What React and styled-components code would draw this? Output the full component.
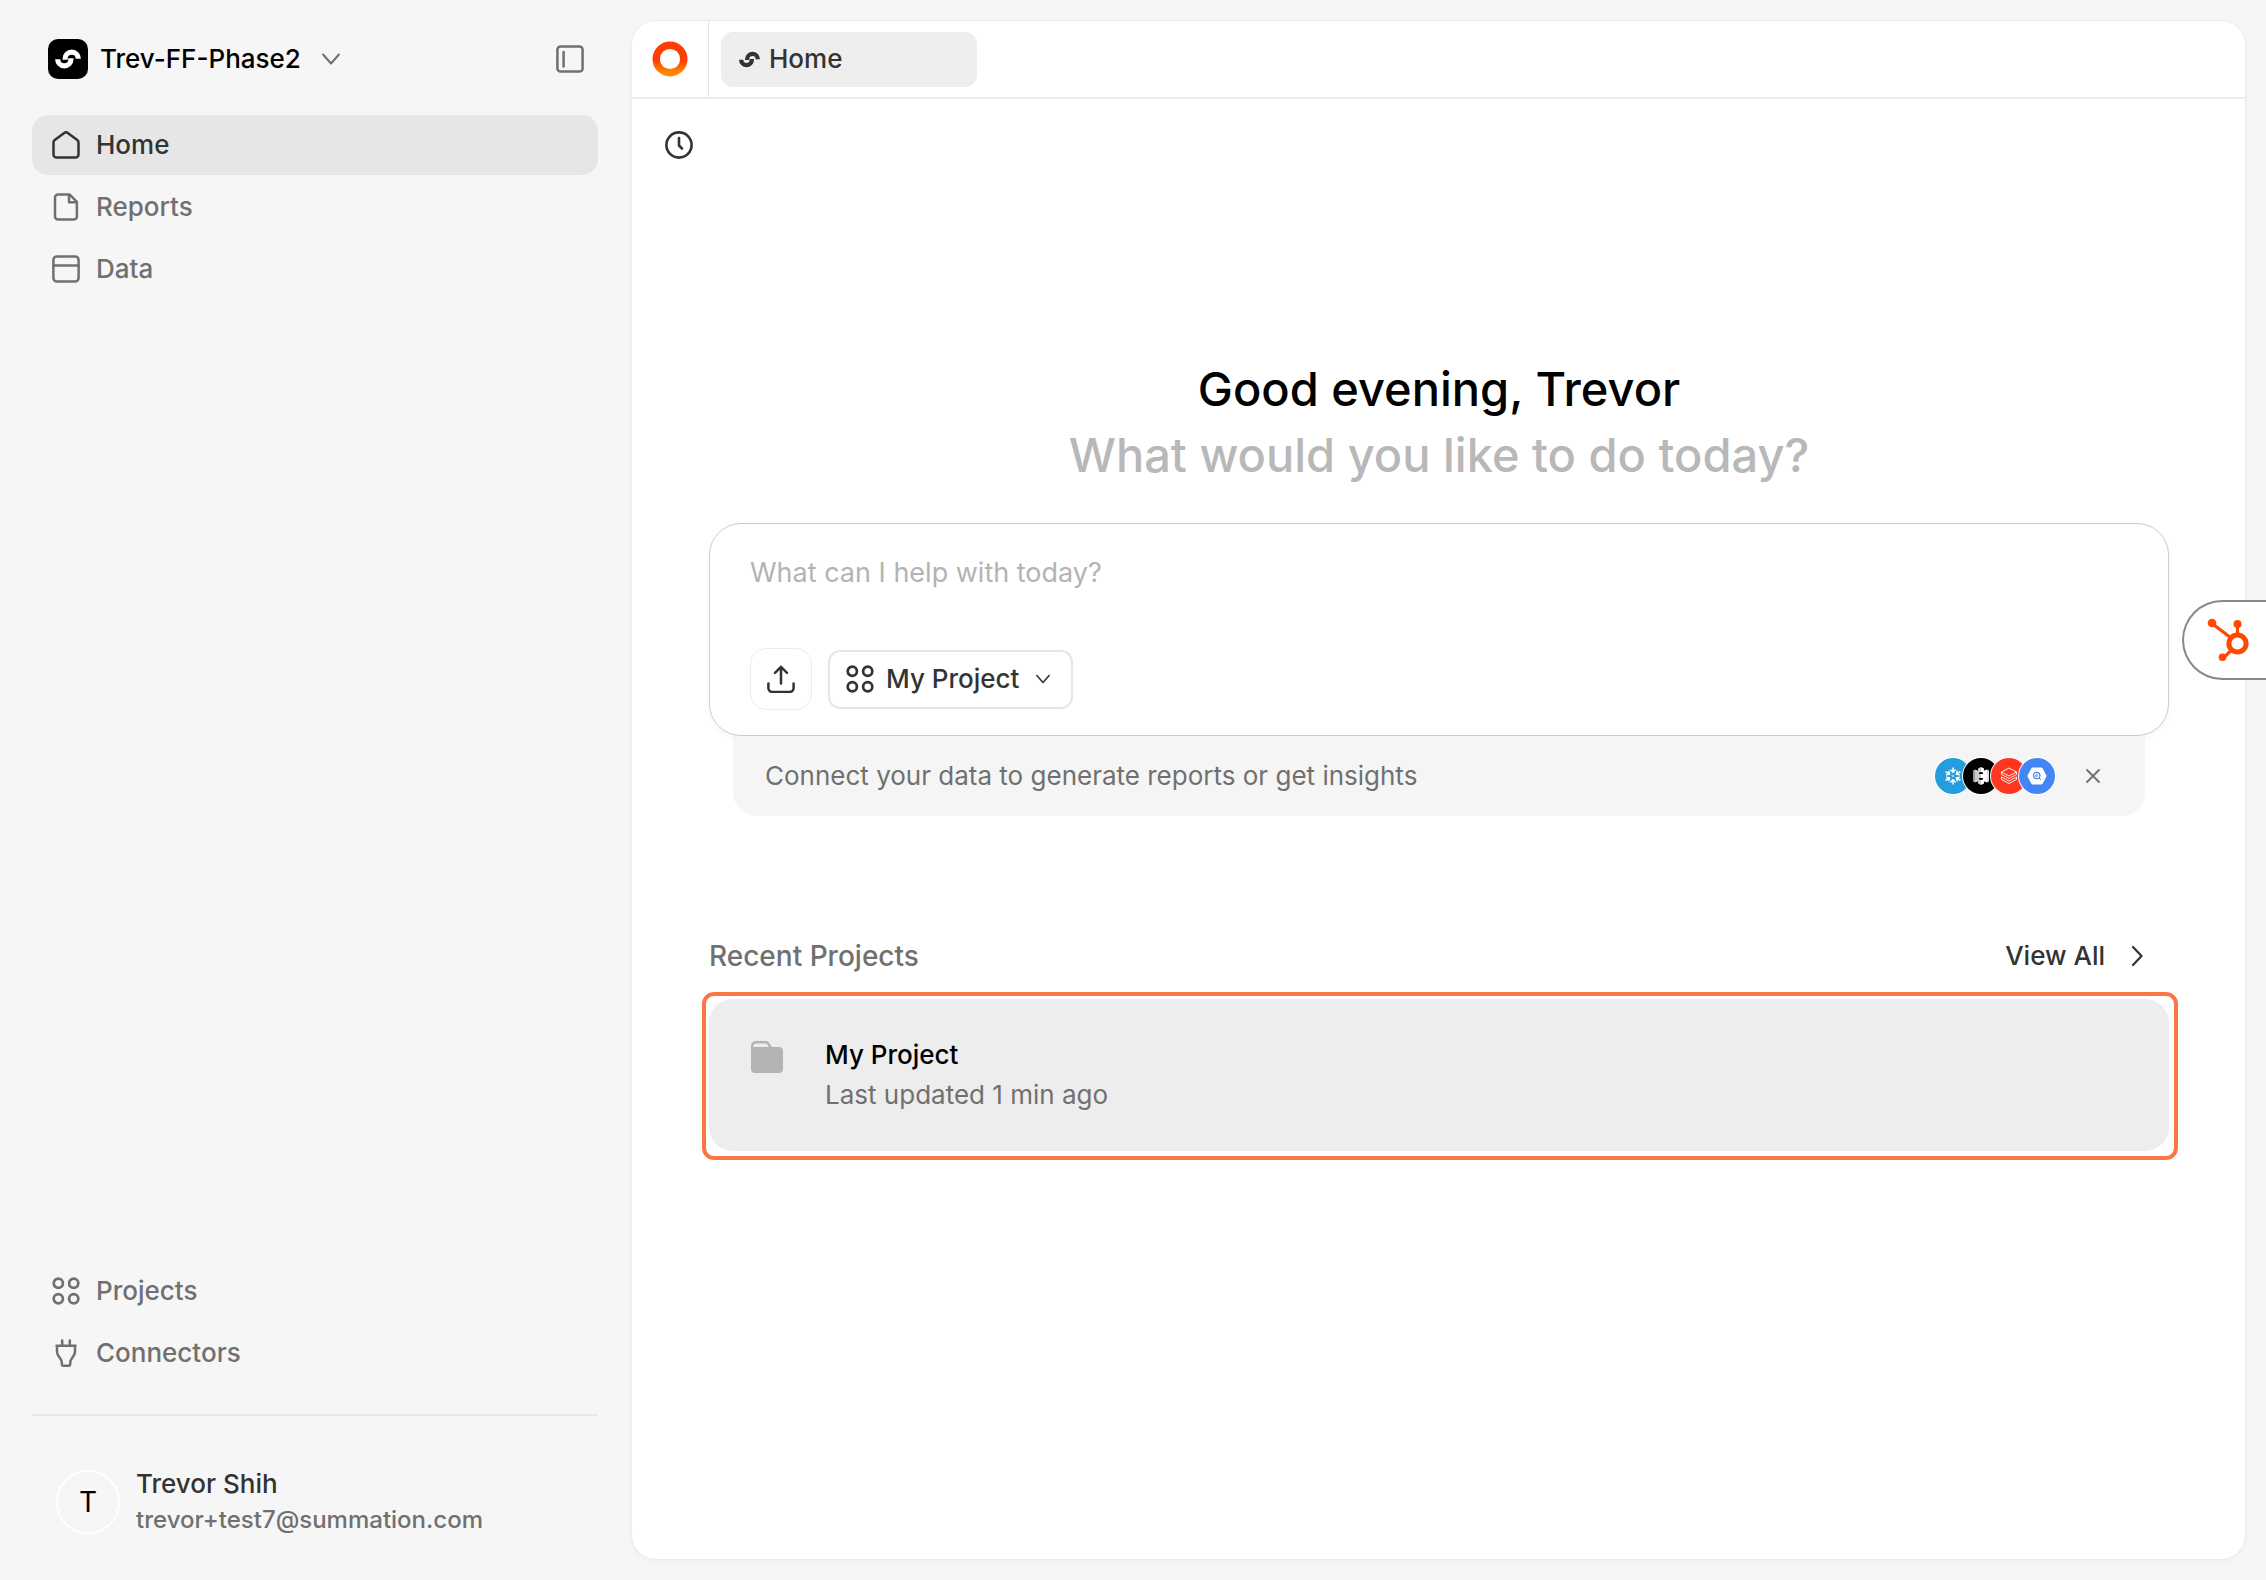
import React from 'react';
import styled, { createGlobalStyle } from 'styled-components';

const GlobalStyle = createGlobalStyle`
  *, *::before, *::after { box-sizing: border-box; }
  body {
    margin: 0;
    background: #f6f6f6;
    color: #333;
    font-family: Inter, "Liberation Sans", sans-serif;
    font-size: 26px;
    line-height: 40px;
  }
  button, input, textarea { font: inherit; color: inherit; }
  button { cursor: pointer; }
  svg { display: block; flex: none; }
  h1, h2, p { margin: 0; font: inherit; }
`;

const Shell = styled.div`
  display: flex;
  min-height: 100vh;
  padding: 21px 21px 21px 32px;
  gap: 34px;
`;

const Sidebar = styled.aside`
  flex: none;
  width: 566px;
  display: flex;
  flex-direction: column;
`;

const Workspace = styled.header`
  display: flex;
  align-items: center;
  justify-content: space-between;
  padding: 0 14px 0 16px;
  height: 76px;
  margin-bottom: 18px;
`;

const PlainButton = styled.button`
  display: flex;
  align-items: center;
  gap: ${(p) => p.$gap || 0}px;
  padding: 0;
  border: 0;
  background: none;
  color: ${(p) => p.$color || '#707070'};
  font-weight: 500;
`;

const WorkspaceName = styled.span`
  color: #000;
  margin-right: 9px;
`;

const NavList = styled.nav`
  display: flex;
  flex-direction: column;
  gap: 2px;
  ${(p) => p.$end && 'margin-top: auto;'}
`;

const NavLink = styled.a`
  display: flex;
  align-items: center;
  gap: 16px;
  height: 60px;
  padding: 0 20px;
  border-radius: 16px;
  text-decoration: none;
  font-weight: 500;
  color: ${(p) => (p.$active ? '#333' : '#707070')};
  background: ${(p) => (p.$active ? '#e6e6e6' : 'transparent')};
`;

const Account = styled.footer`
  display: flex;
  align-items: center;
  gap: 16px;
  margin-top: 31px;
  padding: 50px 24px 21px;
  border-top: 2px solid #e8e8e8;
`;

const Avatar = styled.div`
  flex: none;
  display: grid;
  place-items: center;
  width: 64px;
  height: 64px;
  border: 2px solid #fff;
  border-radius: 50%;
  color: #000;
  font-size: 28px;
`;

const AccountName = styled.p`
  line-height: 36px;
  font-weight: 500;
`;

const AccountMail = styled.p`
  font-size: 24px;
  line-height: 36px;
  font-weight: 500;
  color: #707070;
`;

const Panel = styled.div`
  flex: 1;
  min-width: 0;
  display: flex;
  flex-direction: column;
  background: #fff;
  border-radius: 24px;
  box-shadow: 0 0 0 1px #ececec, 0 2px 6px rgba(0, 0, 0, 0.04);
`;

const TabBar = styled.div`
  display: flex;
  align-items: center;
  height: 78px;
  border-bottom: 2px solid #ececec;
`;

const BrandCell = styled.div`
  display: grid;
  place-items: center;
  width: 77px;
  height: 100%;
  border-right: 1px solid #e2e2e2;
`;

const Tab = styled.button`
  display: flex;
  align-items: center;
  gap: 9px;
  width: 256px;
  height: 55px;
  margin-left: 12px;
  padding: 0 18px;
  border: 0;
  border-radius: 12px;
  background: #eee;
  font-weight: 500;
`;

const Toolbar = styled.div`
  display: flex;
  padding: 32px 33px;
`;

const Content = styled.main`
  display: flex;
  flex-direction: column;
  padding: 165px 76px 0 77px;
`;

const Greeting = styled.h1`
  text-align: center;
  font-size: 47px;
  line-height: 66px;
  font-weight: 500;
  color: #000;
`;

const GreetingHint = styled.span`
  display: block;
  color: #b8b8b8;
`;

const Composer = styled.form`
  display: flex;
  flex-direction: column;
  margin-top: 35px;
  padding: 29px 40px 25px;
  background: #fff;
  border: 1px solid #ccc;
  border-radius: 32px;
  box-shadow: 0 2px 6px rgba(0, 0, 0, 0.04);
`;

const Prompt = styled.textarea`
  display: block;
  width: 100%;
  height: 95px;
  padding: 0;
  border: 0;
  outline: 0;
  resize: none;
  background: none;
  font-size: 27px;
  line-height: 40px;
  &::placeholder { color: #b3b3b3; opacity: 1; }
`;

const ComposerTools = styled.div`
  display: flex;
  align-items: center;
  gap: 16px;
`;

const UploadButton = styled.button`
  display: grid;
  place-items: center;
  width: 62px;
  height: 62px;
  padding: 0;
  border: 1px solid #ededed;
  border-radius: 16px;
  background: #fff;
`;

const ProjectPicker = styled.button`
  display: flex;
  align-items: center;
  gap: 12px;
  height: 59px;
  padding: 0 21px 0 16px;
  border: 2px solid #e6e6e6;
  border-radius: 12px;
  background: #fff;
  font-weight: 500;
  & > svg:last-child { margin-left: 5px; }
`;

const ConnectStrip = styled.div`
  display: flex;
  align-items: center;
  height: 80px;
  margin: 0 24px;
  padding: 0 45px 0 32px;
  border-radius: 0 0 24px 24px;
  background: #f5f5f5;
  color: #707070;
`;

const Connectors = styled.div`
  display: flex;
  margin: 0 31px 0 auto;
`;

const Connector = styled.span`
  display: grid;
  place-items: center;
  width: 36px;
  height: 36px;
  border-radius: 50%;
  background: ${(p) => p.$color};
  box-shadow: 0 0 0 1px #fff;
  & + & { margin-left: -8px; }
`;

const SectionHead = styled.div`
  display: flex;
  align-items: center;
  justify-content: space-between;
  margin-top: 120px;
  padding-right: 22px;
`;

const SectionTitle = styled.h2`
  font-size: 28px;
  font-weight: 500;
  color: #707070;
`;

const ViewAll = styled.a`
  display: flex;
  align-items: center;
  gap: 22px;
  color: #333;
  font-weight: 500;
  text-decoration: none;
`;

const FocusFrame = styled.div`
  margin: 16px -9px 0 -7px;
  padding: 3px 5px 5px 3px;
  border: 4px solid #fb7547;
  border-radius: 12px;
`;

const ProjectCard = styled.a`
  display: flex;
  gap: 42px;
  padding: 36px 42px;
  border-radius: 24px;
  background: #ededed;
  text-decoration: none;
  & > svg { margin-top: 6px; }
`;

const ProjectName = styled.p`
  color: #000;
  font-weight: 500;
`;

const ProjectMeta = styled.p`
  color: #707070;
`;

const HelpTab = styled.button`
  position: fixed;
  top: 600px;
  right: 0;
  display: flex;
  align-items: center;
  width: 84px;
  height: 80px;
  padding: 0 0 0 23px;
  border: 2px solid #888;
  border-right: 0;
  border-radius: 40px 0 0 40px;
  background: #fff;
`;

const Line = ({ size = 28, width = 2, box = 28, children }) => (
  <svg width={size} height={size} viewBox={`0 0 ${box} ${box}`} fill="none" stroke="currentColor"
    strokeWidth={width} strokeLinecap="round" strokeLinejoin="round" aria-hidden="true">
    {children}
  </svg>
);

const HomeIcon = () => (
  <Line width={2.5}>
    <path d="M1.500 11.500a3 3 0 0 1 1.200-2.400L12.600 1.800a2.300 2.300 0 0 1 2.800 0l9.900 7.300a3 3 0 0 1 1.200 2.400V23.500a3 3 0 0 1-3 3h-19a3 3 0 0 1-3-3z" />
  </Line>
);
const ReportIcon = () => (
  <Line width={2.5}>
    <path d="M6 1.400h11.500l7.400 7.400V23.600a3 3 0 0 1-3 3H6a3 3 0 0 1-3-3V4.400a3 3 0 0 1 3-3z" />
    <path d="M17 2V9.200h7.400" />
  </Line>
);
const DataIcon = () => (
  <Line width={2.5}>
    <rect x="1.400" y="1.400" width="25.200" height="25.200" rx="3.600" />
    <path d="M1.400 10.500h25.200" />
  </Line>
);
const PanelIcon = () => (
  <Line width={2.500}>
    <rect x="1.400" y="1.400" width="25.200" height="25.200" rx="3.200" />
    <path d="M7.600 7v14.500" />
  </Line>
);
const GridIcon = () => (
  <Line width={2.700}>
    <circle cx="6.300" cy="6.300" r="4.600" />
    <circle cx="21.700" cy="6.300" r="4.600" />
    <circle cx="6.300" cy="21.700" r="4.600" />
    <circle cx="21.700" cy="21.700" r="4.600" />
  </Line>
);
const PlugIcon = () => (
  <Line width={2.500}>
    <path d="M10.200 1.500v5M17.800 1.500v5M4.500 6.800h19M5 6.800v6.200c0 4 4.800 6.500 4.800 10.500v2c0 .8.500 1.200 1.200 1.200h6c.700 0 1.200-.400 1.200-1.200v-2c0-4 4.800-6.500 4.800-10.500V6.800" />
  </Line>
);
const ClockIcon = () => (
  <Line width={2.600}>
    <circle cx="14" cy="14" r="12.600" />
    <path d="M14 7v7.500l3 3" />
  </Line>
);
const UploadIcon = () => (
  <Line width={2.500}>
    <path d="M14 18.500V1.800M8 7.800l6-6 6 6M1.400 18.500v4.500a4 4 0 0 0 4 4h17.200a4 4 0 0 0 4-4v-4.500" />
  </Line>
);
const ChevronDown = ({ size, width }) => (
  <Line size={size} box={16} width={width}><path d="M1 4l7 8 7-8" /></Line>
);
const ChevronRight = () => (
  <Line size={20} box={20} width={2.200}><path d="M6 1l8.500 9L6 19" /></Line>
);
const CloseIcon = () => (
  <Line size={14} box={14} width={1.800}><path d="M1 1l12 12M13 1L1 13" /></Line>
);

const SwirlPaths = () => (
  <>
    <path d="M9.700 20.300a6.600 6.600 0 0 0 13.200 0v-1" />
    <path d="M30.300 19.700a6.600 6.600 0 0 0-13.200 0v1" />
  </>
);

const Swirl = () => (
  <svg width="21" height="21" viewBox="7 7 26 26" fill="none" stroke="#333" strokeWidth="5.400" aria-hidden="true">
    <SwirlPaths />
  </svg>
);

const Logo = () => (
  <svg width="40" height="40" viewBox="0 0 40 40" aria-hidden="true">
    <rect width="40" height="40" rx="10" />
    <g fill="none" stroke="#fff" strokeWidth="5.200">
      <SwirlPaths />
    </g>
  </svg>
);

const RingIcon = () => (
  <svg width="36" height="36" viewBox="0 0 36 36" fill="none" aria-hidden="true">
    <defs>
      <linearGradient id="ring" x1="0" y1="0" x2="0" y2="1">
        <stop offset="0.550" stopColor="#ff3d00" />
        <stop offset="1" stopColor="#ff8a00" />
      </linearGradient>
    </defs>
    <circle cx="18" cy="18" r="13.800" stroke="url(#ring)" strokeWidth="7.400" />
  </svg>
);

const FolderIcon = () => (
  <svg width="32" height="32" viewBox="0 0 32 32" fill="none" aria-hidden="true">
    <path d="M1.200 12V5a3.800 3.800 0 0 1 3.800-3.800h9.500c1.300 0 2.300.6 3 1.700l2.500 4" stroke="#b3b3b3" strokeWidth="2.400" />
    <path d="M0 9.500A3.500 3.500 0 0 1 3.500 6H28a4 4 0 0 1 4 4v18a4 4 0 0 1-4 4H4a4 4 0 0 1-4-4z" fill="#b3b3b3" />
  </svg>
);

const SnowflakeMark = () => (
  <svg width="18" height="18" viewBox="0 0 18 18" fill="none" stroke="#fff" strokeWidth="1.500" strokeLinecap="round" strokeLinejoin="round" aria-hidden="true">
    {[0, 60, 120, 180, 240, 300].map((a) => (
      <path key={a} transform={`rotate(${a} 9 9)`} d="M9 1v4.200M6.900 3L9 5.200l2.100-2.200" />
    ))}
    <path d="M9 8.200l.8.8-.8.8-.8-.8z" strokeWidth="0.800" />
  </svg>
);
const S3Mark = () => (
  <svg width="18" height="20" viewBox="0 0 18 20" aria-hidden="true">
    <path d="M1 4.500L3 3.500v13l-2-1z" fill="#999" />
    <path d="M3 3.500l4 1.500v10l-4 1.500z" fill="#ccc" />
    <path d="M17 4.500L15 3.500v13l2-1z" fill="#ddd" />
    <path d="M15 3.500L11 5v10l4 1.500z" fill="#fff" />
    <path d="M6 2.500L9 1v5l-3 1zM6 13l3 1v5l-3-1.500zM6.500 8H9v4H6.500z" fill="#ccc" />
    <path d="M12 2.500L9 1v5l3 1zM12 13l-3 1v5l3-1.500zM9 8h2.500v4H9z" fill="#fff" />
  </svg>
);
const StackMark = () => (
  <svg width="18" height="18" viewBox="0 0 18 18" fill="none" stroke="#fff" strokeWidth="0.900" strokeLinejoin="round" aria-hidden="true">
    <path d="M9 1l7.500 4L9 9 1.500 5z" />
    <path d="M1.500 7.500L9 11.500l7.500-4M1.500 10L9 14l7.500-4M1.500 12.500L9 16.500l7.500-4M1.500 5v2.500M16.500 5v2.500M1.500 10v2.500M16.500 10v2.500" />
  </svg>
);
const QueryMark = () => (
  <svg width="20" height="18" viewBox="0 0 20 18" aria-hidden="true">
    <path d="M6 .5h8a2 2 0 0 1 1.700 1l3.500 6.500a2 2 0 0 1 0 2l-3.500 6.500a2 2 0 0 1-1.700 1H6a2 2 0 0 1-1.700-1L.8 10a2 2 0 0 1 0-2l3.500-6.500A2 2 0 0 1 6 .5z" fill="#fff" />
    <circle cx="9.700" cy="8.500" r="3.200" fill="none" stroke="#4285f4" strokeWidth="1.200" />
    <path d="M12 11l2 2M8.700 8v1.800M9.900 7v2.800" stroke="#4285f4" strokeWidth="1" />
  </svg>
);

const SprocketIcon = () => (
  <svg width="42" height="44" viewBox="0 0 42 44" fill="none" stroke="#ff4800" aria-hidden="true">
    <circle cx="30.500" cy="25.500" r="8.600" strokeWidth="5" />
    <path d="M30.500 16V6M23.500 19.500L5 5.500M24 32.500l-7 7" strokeWidth="3.200" />
    <g fill="#ff4800" stroke="none">
      <circle cx="5" cy="5" r="4.300" />
      <circle cx="30.500" cy="6" r="4" />
      <circle cx="15.500" cy="39.300" r="3.800" />
    </g>
  </svg>
);

const mainNav = [
  { label: 'Home', Icon: HomeIcon, active: true },
  { label: 'Reports', Icon: ReportIcon },
  { label: 'Data', Icon: DataIcon },
];
const lowerNav = [
  { label: 'Projects', Icon: GridIcon },
  { label: 'Connectors', Icon: PlugIcon },
];
const connectors = [
  { color: '#249edc', Mark: SnowflakeMark },
  { color: '#000', Mark: S3Mark },
  { color: '#ff3621', Mark: StackMark },
  { color: '#4285f4', Mark: QueryMark },
];

const Nav = ({ items, end }) => (
  <NavList $end={end}>
    {items.map(({ label, Icon, active }) => (
      <NavLink key={label} href="#" $active={active}>
        <Icon />
        {label}
      </NavLink>
    ))}
  </NavList>
);

export default function App() {
  return (
    <>
      <GlobalStyle />
      <Shell>
        <Sidebar>
          <Workspace>
            <PlainButton $gap={12}>
              <Logo />
              <WorkspaceName>Trev-FF-Phase2</WorkspaceName>
              <ChevronDown size={18} width={1.800} />
            </PlainButton>
            <PlainButton aria-label="Collapse sidebar"><PanelIcon /></PlainButton>
          </Workspace>
          <Nav items={mainNav} />
          <Nav items={lowerNav} end />
          <Account>
            <Avatar>T</Avatar>
            <div>
              <AccountName>Trevor Shih</AccountName>
              <AccountMail>trevor+test7@summation.com</AccountMail>
            </div>
          </Account>
        </Sidebar>

        <Panel>
          <TabBar>
            <BrandCell><RingIcon /></BrandCell>
            <Tab><Swirl />Home</Tab>
          </TabBar>
          <Toolbar>
            <PlainButton $color="#333" aria-label="History"><ClockIcon /></PlainButton>
          </Toolbar>
          <Content>
            <Greeting>
              Good evening, Trevor
              <GreetingHint>What would you like to do today?</GreetingHint>
            </Greeting>
            <Composer onSubmit={(e) => e.preventDefault()}>
              <Prompt aria-label="Prompt" placeholder="What can I help with today?" />
              <ComposerTools>
                <UploadButton type="button" aria-label="Upload"><UploadIcon /></UploadButton>
                <ProjectPicker type="button">
                  <GridIcon />
                  My Project
                  <ChevronDown size={14} width={1.800} />
                </ProjectPicker>
              </ComposerTools>
            </Composer>
            <ConnectStrip>
              <p>Connect your data to generate reports or get insights</p>
              <Connectors>
                {connectors.map(({ color, Mark }) => (
                  <Connector key={color} $color={color}><Mark /></Connector>
                ))}
              </Connectors>
              <PlainButton aria-label="Dismiss"><CloseIcon /></PlainButton>
            </ConnectStrip>
            <SectionHead>
              <SectionTitle>Recent Projects</SectionTitle>
              <ViewAll href="#">View All<ChevronRight /></ViewAll>
            </SectionHead>
            <FocusFrame>
              <ProjectCard href="#">
                <FolderIcon />
                <div>
                  <ProjectName>My Project</ProjectName>
                  <ProjectMeta>Last updated 1 min ago</ProjectMeta>
                </div>
              </ProjectCard>
            </FocusFrame>
          </Content>
        </Panel>
      </Shell>
      <HelpTab aria-label="Help"><SprocketIcon /></HelpTab>
    </>
  );
}
